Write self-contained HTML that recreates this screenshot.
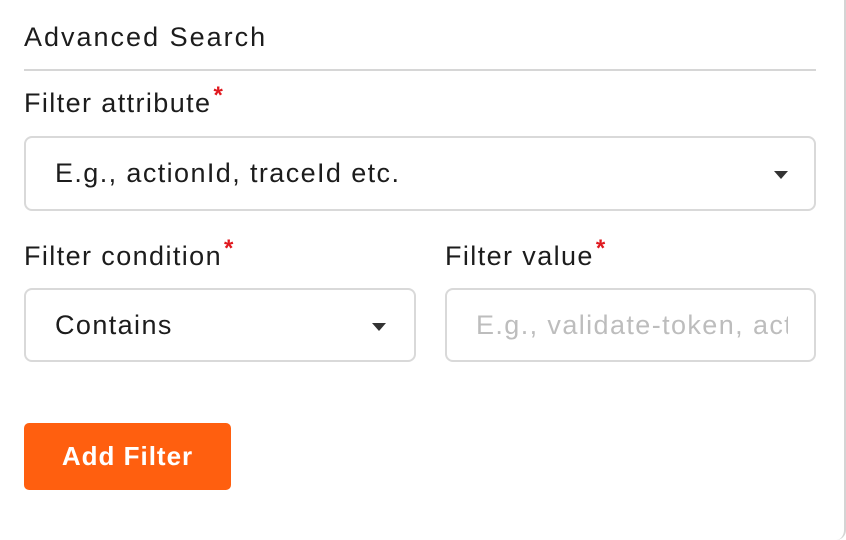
<!DOCTYPE html>
<html><head><style>
*{box-sizing:border-box;margin:0;padding:0}
body{width:846px;height:540px;background:#fff;font-family:"Liberation Sans",sans-serif;color:#1c1c1c;position:relative;overflow:hidden}
.edge{position:absolute;left:0;top:-10px;width:846px;height:550px;border-right:2px solid #d4d4d4;border-bottom-right-radius:10px}
h1{position:absolute;left:24px;top:22px;font-size:27px;font-weight:normal;letter-spacing:2px}
.hr{position:absolute;left:24px;top:69px;width:792px;height:2px;background:#d6d6d6}
.lbl{position:absolute;font-size:27px;letter-spacing:1.4px}
.lbl sup{color:#e0191f;font-size:24px;font-weight:bold;position:relative;top:-6px;margin-left:2px;vertical-align:top}
.box{position:absolute;border:2px solid #d9d9d9;border-radius:8px;font-size:27px;letter-spacing:1.4px;padding-left:29px;display:flex;align-items:center;overflow:hidden;white-space:nowrap}
.arr{position:absolute;width:0;height:0;border-left:7px solid transparent;border-right:7px solid transparent;border-top:8px solid #333}
.btn{position:absolute;left:24px;top:423px;width:207px;height:67px;background:#ff5f0f;border-radius:5px;color:#fff;font-size:26px;font-weight:bold;display:flex;align-items:center;justify-content:center;letter-spacing:1px}
</style></head><body>
<div class="edge"></div>
<h1>Advanced Search</h1>
<div class="hr"></div>
<div class="lbl" style="left:24px;top:88px">Filter attribute<sup>*</sup></div>
<div class="box" style="left:24px;top:136px;width:792px;height:75px">E.g., actionId, traceId etc.<div class="arr" style="left:748px;top:33px"></div></div>
<div class="lbl" style="left:24px;top:241px">Filter condition<sup>*</sup></div>
<div class="lbl" style="left:445px;top:241px">Filter value<sup>*</sup></div>
<div class="box" style="left:24px;top:288px;width:392px;height:74px">Contains<div class="arr" style="left:346px;top:33px"></div></div>
<div class="box" style="left:445px;top:288px;width:371px;height:74px;color:#bdbdbd"><span style="display:inline-block;width:312px;overflow:hidden">E.g., validate-token, actionId</span></div>
<div class="btn">Add Filter</div>
</body></html>
